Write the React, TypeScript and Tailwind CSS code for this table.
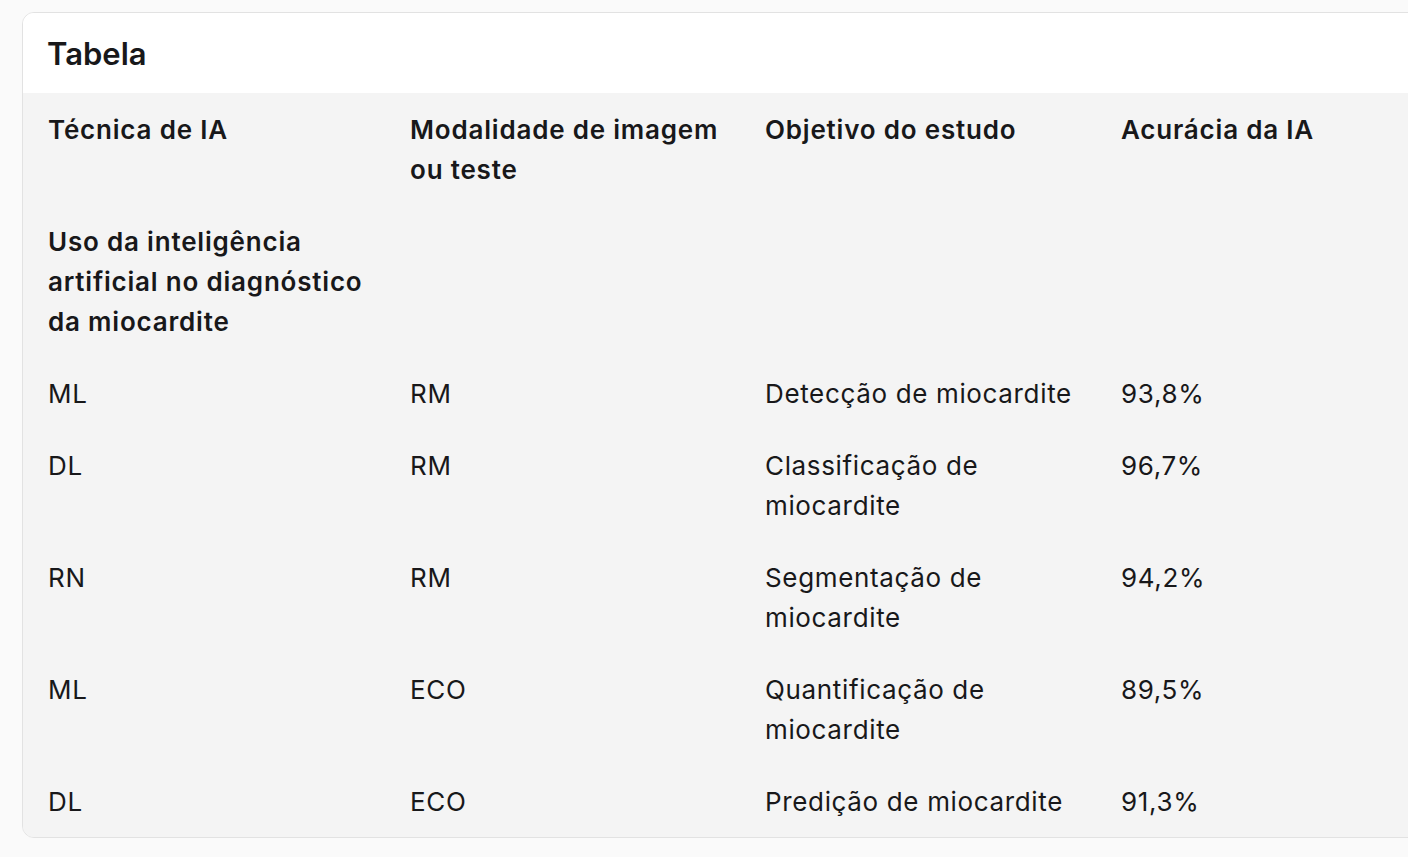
import React from "react";

const rows = [
  ["ML", "RM", "Detecção de miocardite", "93,8%"],
  ["DL", "RM", "Classificação de miocardite", "96,7%"],
  ["RN", "RM", "Segmentação de miocardite", "94,2%"],
  ["ML", "ECO", "Quantificação de miocardite", "89,5%"],
  ["DL", "ECO", "Predição de miocardite", "91,3%"],
];

const cols = "grid grid-cols-[362px_355px_356px_356px]";

const App = () => {
  return (
    <div
      className="w-screen h-screen overflow-hidden bg-[#fafafa] pt-3 pl-[22px] text-[#18181a]"
      style={{ fontFamily: "Inter, 'Noto Sans', sans-serif" }}
    >
      <div className="w-[1480px] rounded-xl border border-[#e2e2e2] overflow-hidden">
        <div className="bg-white pl-[24px] pt-[21px] pb-[19px] text-[31px] leading-10 font-semibold">
          Tabela
        </div>

        <div className="bg-[#f4f4f4] pl-[25px] text-[26px] leading-10 tracking-[0.65px]">
          <div className={`${cols} pt-[17px] pb-[15px] font-semibold tracking-[0.8px]`}>
            <div className="pr-[26px]">Técnica de IA</div>
            <div className="pr-[26px]">Modalidade de imagem ou teste</div>
            <div className="pr-[26px]">Objetivo do estudo</div>
            <div className="pr-[26px]">Acurácia da IA</div>
          </div>

          <div className={`${cols} pt-[17px] pb-[15px] font-semibold tracking-[0.8px]`}>
            <div className="pr-[26px]">
              Uso da inteligência artificial no diagnóstico da miocardite
            </div>
          </div>

          {rows.map((r, i) => (
            <div key={i} className={`${cols} pt-[17px] pb-[15px]`}>
              {r.map((c, j) => (
                <div key={j} className="pr-[26px]">
                  {c}
                </div>
              ))}
            </div>
          ))}
        </div>
      </div>
    </div>
  );
};

export default App;
